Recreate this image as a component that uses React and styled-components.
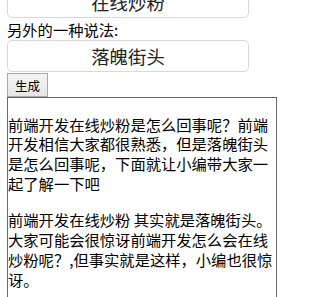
import React from "react";
import styled, { createGlobalStyle } from "styled-components";

const GlobalStyle = createGlobalStyle`
  html, body {
    margin: 0;
    padding: 0;
    background: #fff;
    overflow: hidden;
  }
  body {
    font-family: "Noto Sans CJK SC", "Microsoft YaHei", sans-serif;
    color: #000;
  }
`;

// the page in the shot is scrolled down a little, so the first field is cut off
const Page = styled.div`
  margin-top: -14px;
  padding: 0 7px;
  display: flex;
  flex-direction: column;
  align-items: flex-start;
`;

const Field = styled.input`
  box-sizing: border-box;
  width: 242px;
  height: 32px;
  border: 1px solid #d9d9d9;
  border-radius: 5px;
  background: #fff;
  color: #222;
  font-family: "Noto Sans CJK SC", sans-serif;
  font-size: 18.4px;
  text-align: center;
  padding: 0;
  margin: 0;
  outline: none;
`;

const Label = styled.div`
  height: 21px;
  line-height: 21px;
  font-size: 15.3px;
  margin-top: 1px;
`;

const Button = styled.button`
  box-sizing: border-box;
  height: 24px;
  margin-top: 1px;
  padding: 0 7px;
  font-family: "Noto Sans CJK SC", sans-serif;
  font-size: 12.5px;
  color: #000;
  background: linear-gradient(#f4f4f4, #e6e6e6);
  border: 1px solid #a8a8a8;
  border-radius: 0;
`;

const Output = styled.div`
  box-sizing: border-box;
  width: 270px;
  border: 1px solid #6a6a6a;
  font-size: 15.3px;
  line-height: 19.8px;
  color: #000;
`;

const Para = styled.p`
  margin: 16.5px 0;
`;

export default function App() {
  return (
    <>
      <GlobalStyle />
      <Page>
        <Field defaultValue="在线炒粉" />
        <Label>另外的一种说法:</Label>
        <Field defaultValue="落魄街头" />
        <Button>生成</Button>
        <Output>
          <Para>
            前端开发在线炒粉是怎么回事呢？前端开发相信大家都很熟悉，但是落魄街头是怎么回事呢，下面就让小编带大家一起了解一下吧
          </Para>
          <Para>
            前端开发在线炒粉 其实就是落魄街头。大家可能会很惊讶前端开发怎么会在线炒粉呢？,但事实就是这样，小编也很惊讶。
          </Para>
        </Output>
      </Page>
    </>
  );
}
